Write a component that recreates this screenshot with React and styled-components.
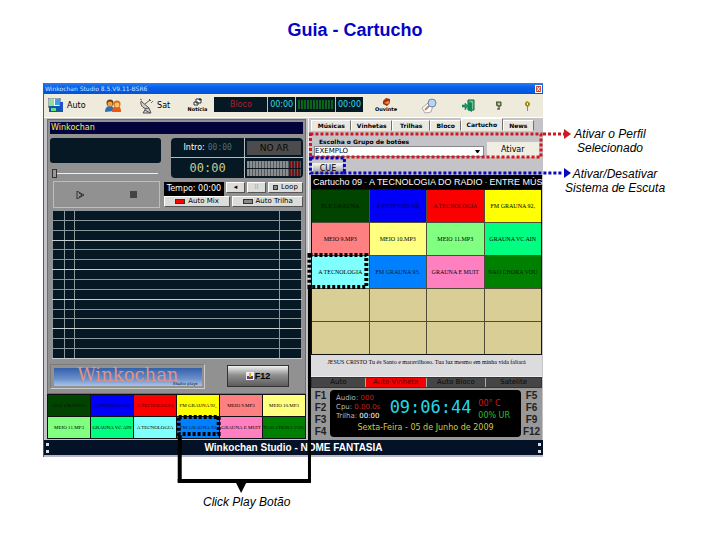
import React from 'react';
import styled, { createGlobalStyle } from 'styled-components';

const GlobalStyle = createGlobalStyle`
  * { box-sizing: border-box; }
  body { margin: 0; background: #fff; color: #000; font-family: "Liberation Sans", Arial, sans-serif; }
  button, select, input { font: inherit; color: inherit; margin: 0; padding: 0; border-radius: 0; }
`;

const Slide = styled.main`
  display: flex;
  flex-direction: column;
  padding-bottom: 28px;
`;
const Title = styled.h1`
  margin: 0;
  padding: 20px 10px 0 0;
  height: 83px;
  text-align: center;
  font-size: 18px;
  line-height: 20px;
  color: #0404c4;
`;
const Content = styled.div`
  display: grid;
  grid-template-columns: minmax(0, 1fr) 177px;
  padding-left: 43px;
`;
const Figure = styled.section`
  position: relative;
  display: flex;
  flex-direction: column;
  background: #c4c4c8;
  border-left: 1px solid #2a5ad0;
  font-family: "DejaVu Sans", Verdana, sans-serif;
  font-size: 8px;
  line-height: 10px;
`;
const Notes = styled.aside`
  display: flex;
  flex-direction: column;
  gap: 12px;
  padding: 44px 0 0 22px;
`;
const Note = styled.p`
  margin: 0;
  width: ${p => (p.$narrow ? 90 : 100)}px;
  text-align: center;
  font-size: 12px;
  line-height: 14px;
  font-style: italic;
  white-space: nowrap;
`;
const Caption = styled.p`
  margin: 0;
  padding-top: 38px;
  padding-left: 32%;
  font-size: 12px;
  line-height: 14px;
  font-style: italic;
`;

const TitleBar = styled.header`
  display: flex;
  justify-content: space-between;
  align-items: center;
  height: 11px;
  background: linear-gradient(#2a7cf4, #0560ea 40%, #0452d8);
  color: #cfe6ff;
  font-size: 6px;
  line-height: 10px;
  white-space: nowrap;
  padding: 0 1px;
`;
const CloseButton = styled.button`
  width: 7px;
  height: 8px;
  border: 1px solid #fff;
  background: #e04828;
  display: flex;
`;
const Toolbar = styled.div`
  display: grid;
  grid-template-columns: 58fr 34fr 42fr 34fr 150fr 47fr 42fr 35fr 28fr 28fr;
  height: 24px;
  padding: 0 2px 0 4px;
  background: #eeebdd;
  border-bottom: 1px solid #fff;
`;
const Tool = styled.button`
  display: flex;
  flex-direction: ${p => (p.$stacked ? 'column' : 'row')};
  align-items: center;
  justify-content: ${p => (p.$start ? 'flex-start' : 'center')};
  gap: ${p => (p.$stacked ? 0 : 3)}px;
  border: 0;
  background: none;
  font-size: ${p => (p.$stacked ? 5 : 8)}px;
  font-weight: ${p => (p.$stacked ? 700 : 400)};
  line-height: ${p => (p.$stacked ? 7 : 12)}px;
  white-space: nowrap;
  svg { flex: none; }
`;
const Readouts = styled.div`
  display: grid;
  grid-template-columns: 54fr 27fr 40fr 27fr;
  gap: 1px;
  height: 15px;
  margin-top: 3px;
  background: #b8c0c4;
`;
const Readout = styled.output`
  display: flex;
  align-items: center;
  justify-content: center;
  background: #061824;
  color: ${p => p.$color};
  font-size: 8px;
`;
const Bars = styled.div`
  margin: 3px 2px;
  background: repeating-linear-gradient(90deg, ${p => p.$a} 0 2px, ${p => p.$b} 2px 3px);
`;
const MeterBox = styled.div`
  display: grid;
  background: #061824;
`;

const Body = styled.div`
  display: grid;
  grid-template-columns: 265fr 234fr;
  height: 322px;
`;
const LeftSide = styled.div`
  display: flex;
  flex-direction: column;
  min-width: 0;
  padding: 1px 2px 0 3px;
  border-right: 1px solid #f0f0f0;
`;
const Player = styled.div`
  display: flex;
  flex-direction: column;
  height: 275px;
  padding: 2px 2px 0;
  background: #919191;
  border: 1px solid #6c6c6c;
`;
const NowPlaying = styled.div`
  height: 12px;
  background: #03033c;
  color: #f4f450;
  padding-left: 1px;
  font-size: 8px;
  line-height: 12px;
`;
const Deck = styled.div`
  display: grid;
  grid-template-columns: 110fr 138fr;
  gap: 3px;
  height: 75px;
  padding-top: 4px;
`;
const Column = styled.div`
  display: flex;
  flex-direction: column;
  min-width: 0;
`;
const Display = styled.div`
  height: 25px;
  border-radius: 3px;
  background: #061824;
`;
const Seek = styled.input`
  appearance: none;
  width: 96%;
  height: 12px;
  margin: 4px 2px 2px;
  background: linear-gradient(transparent 6px, #eee 6px 7px, transparent 7px);
  &::-webkit-slider-thumb {
    appearance: none;
    width: 5px;
    height: 9px;
    background: #989898;
    border: 1px solid #333;
  }
`;
const Transport = styled.div`
  display: flex;
  justify-content: space-around;
  align-items: center;
  height: 27px;
  margin: 0 1px 0 3px;
  border: 1px solid #bdbdbd;
`;
const IconButton = styled.button`
  display: flex;
  border: 0;
  background: none;
`;
const TimePanel = styled.div`
  display: grid;
  grid-template-columns: 55fr 43fr;
  grid-template-rows: 19px 20px;
  gap: 1px;
  margin: 0 0 4px 7px;
  border-radius: 4px;
  overflow: hidden;
  background: #b4bcc0;
`;
const TimeCell = styled.div`
  display: flex;
  align-items: center;
  justify-content: center;
  gap: 3px;
  background: #061824;
  color: ${p => p.$color || '#fff'};
  font-size: ${p => p.$size || 8}px;
  font-family: ${p => (p.$mono ? '"DejaVu Sans Mono", monospace' : 'inherit')};
  white-space: nowrap;
`;
const Dim = styled.span`
  color: #526a78;
  font-family: "DejaVu Sans Mono", monospace;
`;
const OnAir = styled.strong`
  flex: 1;
  margin: 2px;
  text-align: center;
  font-weight: 400;
  line-height: 14px;
  background: #4c4c4c;
  color: #080808;
`;
const Levels = styled.div`
  flex: 1;
  display: grid;
  gap: 1px;
  height: 15px;
  margin: 0 2px;
`;
const Level = styled.div`
  background:
    repeating-linear-gradient(90deg, transparent 0 2px, #505860 2px 3px),
    linear-gradient(90deg, #8c8c8c 76%, #701014 76%);
`;
const DeckRow = styled.div`
  display: grid;
  grid-template-columns: ${p => p.$cols};
  gap: 2px;
  height: ${p => p.$h}px;
`;
const Tempo = styled.output`
  background: #000;
  color: #fff;
  text-align: center;
  font-size: 8px;
  line-height: 13px;
  white-space: nowrap;
`;
const SmallButton = styled.button`
  display: flex;
  align-items: center;
  justify-content: center;
  gap: 3px;
  height: 11px;
  border: 1px solid;
  border-color: #fff #555 #555 #fff;
  background: #dcdcd8;
  color: ${p => (p.$faded ? '#aaa' : '#000')};
  font-size: 7px;
  line-height: 9px;
  white-space: nowrap;
`;
const Lamp = styled.span`
  width: ${p => (p.$small ? 5 : 10)}px;
  height: 5px;
  border: 1px solid #333;
  background: ${p => p.$color};
`;
const Playlist = styled.table`
  table-layout: fixed;
  width: auto;
  height: 149px;
  margin: 1px 1px 0 2px;
  border-collapse: collapse;
  background: #061824;
  td { padding: 0; border: 1px solid #8c979c; }
  tr:nth-child(3n) td { border-bottom-color: #c4ccd0; }
`;
const Col = styled.col`
  width: ${p => p.$w};
`;
const PlayerFoot = styled.div`
  display: grid;
  grid-template-columns: 151fr 22fr 60fr 14fr;
  align-items: center;
  height: 34px;
`;
const LogoBox = styled.div`
  height: 25px;
  padding: 3px 2px 2px 3px;
  border: 1px solid;
  border-color: #7c7c7c #ccc #ccc #7c7c7c;
`;
const LogoPlate = styled.div`
  display: flex;
  flex-direction: column;
  align-items: center;
  height: 18px;
  background: linear-gradient(#3460a8, #6a90cc 60%, #a8c4e8);
  color: #e09480;
  font-family: "DejaVu Serif", serif;
  font-size: 18px;
  line-height: 13px;
  white-space: nowrap;
`;
const LogoSub = styled.small`
  align-self: flex-end;
  padding-right: 4px;
  font-size: 4px;
  font-style: italic;
  line-height: 5px;
  color: #051030;
`;
const F12Button = styled.button`
  grid-column: 3;
  display: flex;
  align-items: center;
  justify-content: center;
  gap: 1px;
  height: 22px;
  border: 1px solid #333;
  background: linear-gradient(#f2f2f2, #909090 45%, #5c5c5c);
  font: 700 9px/12px "Liberation Sans", sans-serif;
`;

const CartGrid = styled.div`
  display: grid;
  grid-template-columns: repeat(${p => p.$cols}, minmax(0, 1fr));
  grid-auto-rows: ${p => p.$row}px;
  gap: 1px;
  background: ${p => p.$line};
  border: 1px solid #111;
  margin-top: ${p => p.$top || 0}px;
`;
const Pad = styled.button`
  border: 0;
  background: ${p => p.$bg};
  color: ${p => p.$ink || '#000'};
  font: ${p => p.$size || 6}px/8px "Liberation Serif", serif;
  white-space: nowrap;
`;

const RightSide = styled.div`
  display: flex;
  flex-direction: column;
  min-width: 0;
  padding: 0 1px 0 2px;
`;
const Tabs = styled.nav`
  display: grid;
  grid-template-columns: 41fr 41fr 39fr 31fr 42fr 32fr 8fr;
  align-items: end;
  height: 13px;
`;
const Tab = styled.button`
  height: ${p => (p.$active ? 13 : 11)}px;
  border: 1px solid;
  border-color: #fff #707070 transparent #fff;
  background: #e9e7de;
  font-size: 6px;
  font-weight: 700;
  line-height: 9px;
`;
const GroupForm = styled.form`
  display: grid;
  grid-template-columns: 168fr 52fr;
  column-gap: 3px;
  height: 28px;
  padding: 6px 3px 0 3px;
  grid-template-rows: 9px 11px;
`;
const Label = styled.label`
  grid-column: 1;
  padding-left: 5px;
  font-size: 6px;
  font-weight: 700;
  line-height: 9px;
  white-space: nowrap;
`;
const SelectBox = styled.div`
  grid-column: 1;
  display: grid;
  grid-template-columns: 1fr 8px;
  align-items: center;
  background: #fff;
  border: 1px solid #888;
`;
const Select = styled.select`
  grid-area: 1 / 1 / 2 / 3;
  appearance: none;
  border: 0;
  background: none;
  height: 9px;
  font-size: 7px;
  line-height: 9px;
`;
const Caret = styled.svg`
  grid-area: 1 / 2;
  pointer-events: none;
`;
const Activate = styled.button`
  grid-column: 2;
  grid-row: 1 / 3;
  height: 15px;
  margin-top: 5px;
  border: 0;
  background: #f0eee2;
  font-size: 8px;
  line-height: 14px;
`;
const CueRow = styled.div`
  height: 16px;
  padding: 4px 1px 0;
`;
const Cue = styled.button`
  display: block;
  width: 14%;
  height: 11px;
  border: 1px solid;
  border-color: #eee #777 #777 #eee;
  background: linear-gradient(#f0f0f0, #9a9a9a);
  font-size: 8px;
  line-height: 9px;
`;
const CartHeader = styled.div`
  display: flex;
  gap: 2px;
  height: 14px;
  padding-left: 2px;
  background: #000;
  color: #fff;
  font: 9px/14px "Liberation Sans", sans-serif;
  white-space: nowrap;
`;
const Message = styled.p`
  height: 22px;
  margin: 0;
  padding-top: 3px;
  background: #dcdcdf;
  border-bottom: 1px solid #eee;
  text-align: center;
  font: 6px/9px "Liberation Serif", serif;
  white-space: nowrap;
`;
const ModeTabs = styled.div`
  display: grid;
  grid-template-columns: 54fr 61fr 60fr 56fr;
  gap: 1px;
  height: 11px;
  background: #aaa;
  border: 1px solid #333;
`;
const Mode = styled.button`
  border: 0;
  background: ${p => (p.$on ? '#f40000' : '#454545')};
  color: ${p => (p.$on ? '#500' : '#080808')};
  font-size: 7px;
  line-height: 9px;
  white-space: nowrap;
`;
const Status = styled.div`
  flex: 1;
  display: grid;
  grid-template-columns: 19px minmax(0, 1fr) 21px;
  padding-top: 2px;
  background: #989898;
`;
const Keys = styled.div`
  display: grid;
  grid-template-rows: repeat(4, 12px);
  justify-items: center;
`;
const Key = styled.button`
  border: 0;
  background: none;
  font: 700 10px/12px "Liberation Sans", sans-serif;
  color: #222;
`;
const Clock = styled.div`
  display: grid;
  grid-template-columns: 52fr 88fr 42fr;
  grid-template-rows: 33px 12px;
  height: 47px;
  padding: 0 3px;
  border-radius: 4px;
  background: #000;
`;
const Stats = styled.div`
  display: flex;
  flex-direction: column;
  padding: 4px 0 0 3px;
  color: #bbb;
  font-size: 7px;
  line-height: 9px;
  white-space: nowrap;
`;
const Tint = styled.span`
  color: ${p => p.$c};
`;
const Digits = styled.time`
  align-self: center;
  text-align: center;
  color: #22d8e8;
  font: 17px/24px "DejaVu Sans Mono", monospace;
`;
const Weather = styled(Stats)`
  padding-top: 8px;
  font-size: 8px;
  line-height: 12px;
`;
const DateLine = styled.time`
  grid-column: 1 / 4;
  text-align: center;
  color: #d0c840;
  font-size: 8px;
  line-height: 10px;
  white-space: nowrap;
`;
const Footer = styled.footer`
  display: flex;
  align-items: center;
  justify-content: space-between;
  height: 17px;
  padding: 0 2px;
  background: #031226;
  border-bottom: 2px solid #b8b8c8;
  color: #fff;
  font: 700 10px/14px "Liberation Sans", sans-serif;
`;
const Overlay = styled.svg`
  position: absolute;
  top: 0;
  left: 0;
  width: 100%;
  height: 100%;
  overflow: visible;
  pointer-events: none;
`;

const AutoIcon = () => (
  <svg width="16" height="15" viewBox="0 0 16 15">
    <rect width="12" height="9" fill="#fff" stroke="#456" />
    <path d="M1 1h5v7H1z" fill="#8ee09a" /><path d="M7 1h5v6H7z" fill="#3aa0f0" />
    <path d="M1 8h14v6H1z" fill="#1258a8" /><path d="M3 10h5v3H3z" fill="#60e080" /><path d="M12 4h3v8h-3z" fill="#2050c8" />
  </svg>
);
const PeopleIcon = () => (
  <svg width="16" height="14" viewBox="0 0 16 14">
    <path d="M0 13c0-4 2-6 5-6s4 2 4 5z" fill="#2870b8" /><path d="M7 13c0-4 2-6 5-6s4 2 4 6z" fill="#e85818" />
    <circle cx="5" cy="4" r="3.5" fill="#684018" /><circle cx="5" cy="5" r="2.5" fill="#f4a040" />
    <circle cx="12" cy="5" r="3.5" fill="#d06c18" /><circle cx="12" cy="6" r="2.4" fill="#ffc060" />
  </svg>
);
const SatIcon = () => (
  <svg width="15" height="16" viewBox="0 0 15 16" fill="none" stroke="#555">
    <path d="M2 3c-1 5 3 9 8 7zM6 6l5-4M10 1l2 2M7 10l-3 5h8l-2-5M6 12l5 3" fill="#ccc" />
    <path d="M12 5l2-2M1 1l2 1" stroke="#e04020" />
  </svg>
);
const NoticeIcon = () => (
  <svg width="9" height="8" viewBox="0 0 9 8" fill="#fff" stroke="#333"><path d="M3 1h5v4H3zM1 4h4v3H1z" /><path d="M6 1h2v1H6z" fill="#333" /></svg>
);
const ListenerIcon = () => (
  <svg width="9" height="8" viewBox="0 0 9 8"><path d="M1 3l3-3 4 1v4l-3 3-4-2z" fill="#a03010" /><path d="M2 5l4-2 2 1-2 2z" fill="#f09040" /></svg>
);
const SearchIcon = () => (
  <svg width="18" height="16" viewBox="0 0 18 16">
    <path d="M1 10l6-5 5 2-2 7-6 1z" fill="#fff" stroke="#a8a8b0" /><circle cx="11" cy="5" r="4" fill="#b8d4f0" stroke="#6c84a8" /><path d="M8 8l-4 4" stroke="#c08858" strokeWidth="2" />
  </svg>
);
const DoorIcon = () => (
  <svg width="13" height="14" viewBox="0 0 13 14"><path d="M6 1h6v10H6z" fill="#60c890" stroke="#165838" /><path d="M6 2l4 2v9l-4-2z" fill="#128858" /><path d="M0 6h3V4l3 3-3 4V8H0z" fill="#18a068" stroke="#064" strokeWidth=".5" /></svg>
);
const HelpIcon = () => (
  <svg width="6" height="9" viewBox="0 0 6 9" fill="none"><path d="M0 1h5v4H1z" fill="#7c9850" stroke="#445028" /><path d="M2 3h2" stroke="#fff" /><path d="M3 5v3M1 8h3" stroke="#333" /></svg>
);
const KeyIcon = () => (
  <svg width="7" height="10" viewBox="0 0 7 10"><path d="M1 2l2-2 3 2v2L4 6v4H3V6L1 4z" fill="#a09010" /><path d="M3 2h1v2H3z" fill="#ffc" /></svg>
);

const padSets = {
  left: [
    ['OLE GRAUNA', '#004400', '#001400'], ['A ENTENDO GR', '#0000fa', '#000050'], ['A TECNOLOGIA', '#fa0000', '#500000'], ['FM GRAUNA 92,', '#ffff00'], ['MEIO 9.MP3', '#ff8080'], ['MEIO 10.MP3', '#ffff80'],
    ['MEIO 11.MP3', '#80ff80'], ['GRAUNA VC AIN', '#00ff80'], ['A TECNOLOGIA', '#80ffff'], ['FM GRAUNA 93', '#0080ff', '#001840'], ['GRAUNA E MUIT', '#ff80c0'], ['NAO CHORA VOU', '#008000', '#002000'],
  ],
  right: [
    ['ELE GRAUNA', '#004400', '#001400'], ['A ENTENDO GR', '#0000fa', '#000050'], ['A TECNOLOGIA', '#fa0000', '#500000'], ['FM GRAUNA 92,', '#ffff00'],
    ['MEIO 9.MP3', '#ff8080'], ['MEIO 10.MP3', '#ffff80'], ['MEIO 11.MP3', '#80ff80'], ['GRAUNA VC AIN', '#00ff80'],
    ['A TECNOLOGIA', '#80ffff'], ['FM GRAUNA 93.', '#0080ff', '#001840'], ['GRAUNA E MUIT', '#ff80c0'], ['NAO CHORA VOU', '#008000', '#002000'],
    ...Array.from({ length: 8 }, () => ['', '#d9cf96']),
  ],
};

function Pads({ items, size }) {
  return items.map(([name, bg, ink], i) => (
    <Pad key={i} type="button" $bg={bg} $ink={ink} $size={size} aria-label={name || `Botão ${i + 1}`}>{name}</Pad>
  ));
}

function Dots() {
  return <svg width="3" height="10" viewBox="0 0 3 10" fill="#ddd"><path d="M0 0h3v3H0zM0 7h3v3H0z" /></svg>;
}

function PlayerPanel() {
  return (
    <Player>
      <NowPlaying>Winkochan</NowPlaying>
      <Deck>
        <Column>
          <Display />
          <Seek type="range" defaultValue="0" aria-label="Posição" />
          <Transport>
            <IconButton type="button" aria-label="Play"><svg width="9" height="8" viewBox="0 0 9 8" fill="none" stroke="#333"><path d="M1 0l7 4-7 4zM3 2l3 2-3 2" /></svg></IconButton>
            <IconButton type="button" aria-label="Stop"><svg width="7" height="7"><path d="M0 0h7v7H0z" fill="#444" /></svg></IconButton>
          </Transport>
        </Column>
        <Column>
          <TimePanel>
            <TimeCell>Intro: <Dim>00:00</Dim></TimeCell>
            <TimeCell $size={9}><OnAir>NO AR</OnAir></TimeCell>
            <TimeCell $mono $color="#c8cc90" $size={12}>00:00</TimeCell>
            <TimeCell><Levels><Level /><Level /></Levels></TimeCell>
          </TimePanel>
          <DeckRow $cols="60fr 19fr 19fr 35fr" $h={14}>
            <Tempo>Tempo: 00:00</Tempo>
            <SmallButton type="button" aria-label="Anterior">◂</SmallButton>
            <SmallButton type="button" aria-label="Pausa" $faded>II</SmallButton>
            <SmallButton type="button"><Lamp $small $color="#888" />Loop</SmallButton>
          </DeckRow>
          <DeckRow $cols="66fr 70fr" $h={12}>
            <SmallButton type="button"><Lamp $color="#f00" />Auto Mix</SmallButton>
            <SmallButton type="button"><Lamp $color="#888" />Auto Trilha</SmallButton>
          </DeckRow>
        </Column>
      </Deck>
      <Playlist aria-label="Lista">
        <colgroup><Col $w="5%" /><Col $w="4%" /><Col $w="82%" /><Col $w="9%" /></colgroup>
        <tbody>
          {Array.from({ length: 15 }, (_, i) => <tr key={i}><td /><td /><td /><td /></tr>)}
        </tbody>
      </Playlist>
      <PlayerFoot>
        <LogoBox><LogoPlate>Winkochan<LogoSub>Studio plays</LogoSub></LogoPlate></LogoBox>
        <F12Button type="button">
          <svg width="8" height="8" viewBox="0 0 8 8"><path d="M0 0h8v8H0z" fill="#eee" /><path d="M1 4h6v3H1z" fill="#604070" /><path d="M3 1h2v4H3z" fill="#e0b020" /></svg>
          F12
        </F12Button>
      </PlayerFoot>
    </Player>
  );
}

function CartPanel() {
  return (
    <RightSide>
      <Tabs>
        {['Músicas', 'Vinhetas', 'Trilhas', 'Bloco', 'Cartucho', 'News'].map(t => <Tab key={t} type="button" $active={t === 'Cartucho'}>{t}</Tab>)}
      </Tabs>
      <GroupForm>
        <Label htmlFor="grupo">Escolha o Grupo de botões</Label>
        <SelectBox>
          <Select id="grupo"><option>EXEMPLO</option></Select>
          <Caret width="5" height="3" viewBox="0 0 5 3"><path d="M0 0h5L3 3H2z" /></Caret>
        </SelectBox>
        <Activate type="button">Ativar</Activate>
      </GroupForm>
      <CueRow><Cue type="button">CUE</Cue></CueRow>
      <CartHeader>
        <span>Cartucho 09</span><Tint $c="#777">-</Tint><span>A TECNOLOGIA DO RADIO</span><Tint $c="#777">-</Tint><span>ENTRE MÚSI</span>
      </CartHeader>
      <CartGrid $cols={4} $row={32} $line="#504c38"><Pads items={padSets.right} /></CartGrid>
      <Message>JESUS CRISTO Tu és Santo e maravilhoso. Tua luz mesmo em minha vida faltará</Message>
      <ModeTabs>
        {['Auto', 'Auto Vinheta', 'Auto Bloco', 'Satelite'].map(t => <Mode key={t} type="button" $on={t === 'Auto Vinheta'}>{t}</Mode>)}
      </ModeTabs>
      <Status>
        <Keys>{['F1', 'F2', 'F3', 'F4'].map(k => <Key key={k} type="button">{k}</Key>)}</Keys>
        <Clock>
          <Stats>
            <span>Áudio: <Tint $c="#c02020">000</Tint></span>
            <span>Cpu: <Tint $c="#c02020">0.00.0s</Tint></span>
            <span>Trilha: <Tint $c="#fff">00:00</Tint></span>
          </Stats>
          <Digits>09:06:44</Digits>
          <Weather><Tint $c="#d81818">00° C</Tint><Tint $c="#20c030">00% UR</Tint></Weather>
          <DateLine>Sexta-Feira - 05 de Junho de 2009</DateLine>
        </Clock>
        <Keys>{['F5', 'F6', 'F9', 'F12'].map(k => <Key key={k} type="button">{k}</Key>)}</Keys>
      </Status>
    </RightSide>
  );
}

function Callouts() {
  return (
    <Overlay fill="none" aria-hidden="true">
      <g stroke="#d01820" strokeWidth="3" strokeDasharray="3 2">
        <rect x="53.4%" y="51" width="46.2%" height="23" />
        <svg x="100%" overflow="visible"><path d="M0 51h22" /><path d="M21 46l7 5-7 5z" fill="#d01820" stroke="none" /></svg>
      </g>
      <g stroke="#0808b8" strokeWidth="3" strokeDasharray="3 2">
        <rect x="53.4%" y="75" width="6.8%" height="15" />
        <line x1="60%" x2="104%" y1="90" y2="90" />
        <svg x="100%" overflow="visible"><path d="M21 85l7 5-7 5z" fill="#0808b8" stroke="none" /></svg>
      </g>
      <g stroke="#000" strokeWidth="4">
        <rect x="53.2%" y="172" width="11.4%" height="32" strokeDasharray="3 2" />
        <rect x="27%" y="334" width="8%" height="17" strokeDasharray="3 2" />
        <line x1="53.2%" x2="53.2%" y1="204" y2="399" strokeWidth="3" />
        <line x1="27.2%" x2="27.2%" y1="352" y2="399" />
        <line x1="26.8%" x2="53.5%" y1="398" y2="398" />
        <svg x="39.5%" overflow="visible"><path d="M-5 400h10l-5 10z" fill="#000" stroke="none" /></svg>
      </g>
    </Overlay>
  );
}

export default function App() {
  return (
    <Slide>
      <GlobalStyle />
      <Title>Guia - Cartucho</Title>
      <Content>
        <Figure>
          <TitleBar>Winkochan Studio 8.5.V9.11-BSR6<CloseButton type="button" aria-label="Fechar"><svg width="5" height="6" viewBox="0 0 5 6" stroke="#fff"><path d="M1 1l3 4M4 1L1 5" /></svg></CloseButton></TitleBar>
          <Toolbar>
            <Tool type="button" $start><AutoIcon />Auto</Tool>
            <Tool type="button" $start aria-label="Usuários"><PeopleIcon /></Tool>
            <Tool type="button" $start><SatIcon />Sat</Tool>
            <Tool type="button" $stacked><NoticeIcon />Notícia</Tool>
            <Readouts>
              <Readout $color="#b02028">Bloco</Readout>
              <Readout $color="#30d8e0">00:00</Readout>
              <MeterBox><Bars $a="#0c6418" $b="#061824" /></MeterBox>
              <Readout $color="#30d8e0">00:00</Readout>
            </Readouts>
            <Tool type="button" $stacked><ListenerIcon />Ouvinte</Tool>
            <Tool type="button" aria-label="Buscar"><SearchIcon /></Tool>
            <Tool type="button" aria-label="Sair"><DoorIcon /></Tool>
            <Tool type="button" aria-label="Ajuda"><HelpIcon /></Tool>
            <Tool type="button" aria-label="Licença"><KeyIcon /></Tool>
          </Toolbar>
          <Body>
            <LeftSide>
              <PlayerPanel />
              <CartGrid $cols={6} $row={21} $line="#111"><Pads items={padSets.left} size={5} /></CartGrid>
            </LeftSide>
            <CartPanel />
          </Body>
          <Footer><Dots />Winkochan Studio - NOME FANTASIA<Dots /></Footer>
          <Callouts />
        </Figure>
        <Notes>
          <Note $narrow>Ativar o Perfil<br />Selecionado</Note>
          <Note>Ativar/Desativar<br />Sistema de Escuta</Note>
        </Notes>
        <Caption>Click Play Botão</Caption>
      </Content>
    </Slide>
  );
}
